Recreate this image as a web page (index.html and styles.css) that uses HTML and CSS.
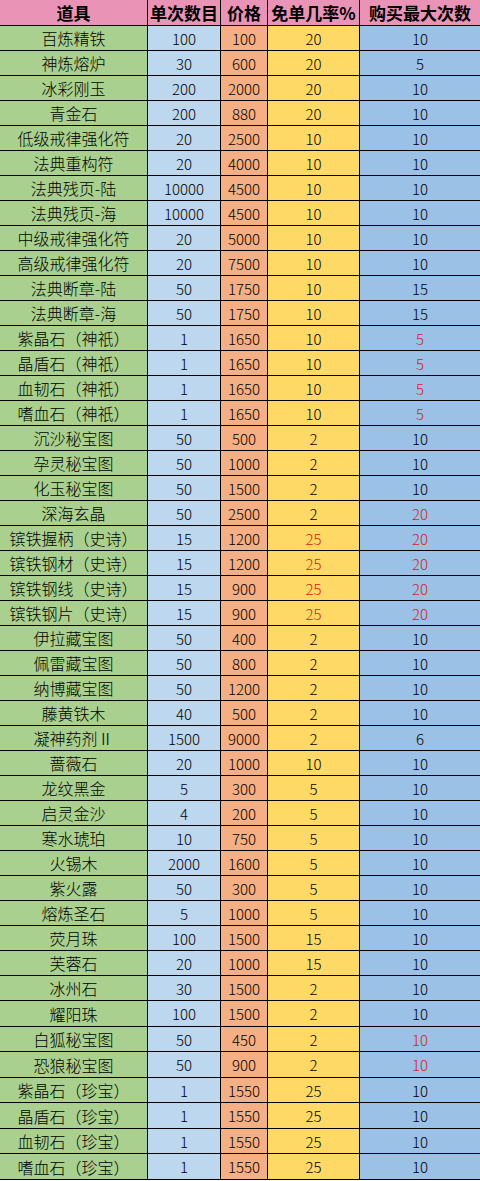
FILE: index.html
```html
<!DOCTYPE html>
<html lang="zh-CN">
<head>
<meta charset="utf-8">
<title>道具</title>
<link rel="stylesheet" href="styles.css">
</head>
<body>
<div class="sheet">
  <div class="row head"><div class="c c1">道具</div><div class="c c2">单次数目</div><div class="c c3">价格</div><div class="c c4">免单几率%</div><div class="c c5">购买最大次数</div></div>
  <div class="row"><div class="c c1">百炼精铁</div><div class="c c2">100</div><div class="c c3">100</div><div class="c c4">20</div><div class="c c5">10</div></div>
  <div class="row"><div class="c c1">神炼熔炉</div><div class="c c2">30</div><div class="c c3">600</div><div class="c c4">20</div><div class="c c5">5</div></div>
  <div class="row"><div class="c c1">冰彩刚玉</div><div class="c c2">200</div><div class="c c3">2000</div><div class="c c4">20</div><div class="c c5">10</div></div>
  <div class="row"><div class="c c1">青金石</div><div class="c c2">200</div><div class="c c3">880</div><div class="c c4">20</div><div class="c c5">10</div></div>
  <div class="row"><div class="c c1">低级戒律强化符</div><div class="c c2">20</div><div class="c c3">2500</div><div class="c c4">10</div><div class="c c5">10</div></div>
  <div class="row"><div class="c c1">法典重构符</div><div class="c c2">20</div><div class="c c3">4000</div><div class="c c4">10</div><div class="c c5">10</div></div>
  <div class="row"><div class="c c1">法典残页-陆</div><div class="c c2">10000</div><div class="c c3">4500</div><div class="c c4">10</div><div class="c c5">10</div></div>
  <div class="row"><div class="c c1">法典残页-海</div><div class="c c2">10000</div><div class="c c3">4500</div><div class="c c4">10</div><div class="c c5">10</div></div>
  <div class="row"><div class="c c1">中级戒律强化符</div><div class="c c2">20</div><div class="c c3">5000</div><div class="c c4">10</div><div class="c c5">10</div></div>
  <div class="row"><div class="c c1">高级戒律强化符</div><div class="c c2">20</div><div class="c c3">7500</div><div class="c c4">10</div><div class="c c5">10</div></div>
  <div class="row"><div class="c c1">法典断章-陆</div><div class="c c2">50</div><div class="c c3">1750</div><div class="c c4">10</div><div class="c c5">15</div></div>
  <div class="row"><div class="c c1">法典断章-海</div><div class="c c2">50</div><div class="c c3">1750</div><div class="c c4">10</div><div class="c c5">15</div></div>
  <div class="row"><div class="c c1">紫晶石（神祇）</div><div class="c c2">1</div><div class="c c3">1650</div><div class="c c4">10</div><div class="c c5 red">5</div></div>
  <div class="row"><div class="c c1">晶盾石（神祇）</div><div class="c c2">1</div><div class="c c3">1650</div><div class="c c4">10</div><div class="c c5 red">5</div></div>
  <div class="row"><div class="c c1">血韧石（神祇）</div><div class="c c2">1</div><div class="c c3">1650</div><div class="c c4">10</div><div class="c c5 red">5</div></div>
  <div class="row"><div class="c c1">嗜血石（神祇）</div><div class="c c2">1</div><div class="c c3">1650</div><div class="c c4">10</div><div class="c c5 red">5</div></div>
  <div class="row"><div class="c c1">沉沙秘宝图</div><div class="c c2">50</div><div class="c c3">500</div><div class="c c4">2</div><div class="c c5">10</div></div>
  <div class="row"><div class="c c1">孕灵秘宝图</div><div class="c c2">50</div><div class="c c3">1000</div><div class="c c4">2</div><div class="c c5">10</div></div>
  <div class="row"><div class="c c1">化玉秘宝图</div><div class="c c2">50</div><div class="c c3">1500</div><div class="c c4">2</div><div class="c c5">10</div></div>
  <div class="row"><div class="c c1">深海玄晶</div><div class="c c2">50</div><div class="c c3">2500</div><div class="c c4">2</div><div class="c c5 red">20</div></div>
  <div class="row"><div class="c c1">镔铁握柄（史诗）</div><div class="c c2">15</div><div class="c c3">1200</div><div class="c c4 red">25</div><div class="c c5 red">20</div></div>
  <div class="row"><div class="c c1">镔铁钢材（史诗）</div><div class="c c2">15</div><div class="c c3">1200</div><div class="c c4 red">25</div><div class="c c5 red">20</div></div>
  <div class="row"><div class="c c1">镔铁钢线（史诗）</div><div class="c c2">15</div><div class="c c3">900</div><div class="c c4 red">25</div><div class="c c5 red">20</div></div>
  <div class="row"><div class="c c1">镔铁钢片（史诗）</div><div class="c c2">15</div><div class="c c3">900</div><div class="c c4 red">25</div><div class="c c5 red">20</div></div>
  <div class="row"><div class="c c1">伊拉藏宝图</div><div class="c c2">50</div><div class="c c3">400</div><div class="c c4">2</div><div class="c c5">10</div></div>
  <div class="row"><div class="c c1">佩雷藏宝图</div><div class="c c2">50</div><div class="c c3">800</div><div class="c c4">2</div><div class="c c5">10</div></div>
  <div class="row"><div class="c c1">纳博藏宝图</div><div class="c c2">50</div><div class="c c3">1200</div><div class="c c4">2</div><div class="c c5">10</div></div>
  <div class="row"><div class="c c1">藤黄铁木</div><div class="c c2">40</div><div class="c c3">500</div><div class="c c4">2</div><div class="c c5">10</div></div>
  <div class="row"><div class="c c1">凝神药剂Ⅱ</div><div class="c c2">1500</div><div class="c c3">9000</div><div class="c c4">2</div><div class="c c5">6</div></div>
  <div class="row"><div class="c c1">蔷薇石</div><div class="c c2">20</div><div class="c c3">1000</div><div class="c c4">10</div><div class="c c5">10</div></div>
  <div class="row"><div class="c c1">龙纹黑金</div><div class="c c2">5</div><div class="c c3">300</div><div class="c c4">5</div><div class="c c5">10</div></div>
  <div class="row"><div class="c c1">启灵金沙</div><div class="c c2">4</div><div class="c c3">200</div><div class="c c4">5</div><div class="c c5">10</div></div>
  <div class="row"><div class="c c1">寒水琥珀</div><div class="c c2">10</div><div class="c c3">750</div><div class="c c4">5</div><div class="c c5">10</div></div>
  <div class="row"><div class="c c1">火锡木</div><div class="c c2">2000</div><div class="c c3">1600</div><div class="c c4">5</div><div class="c c5">10</div></div>
  <div class="row"><div class="c c1">紫火露</div><div class="c c2">50</div><div class="c c3">300</div><div class="c c4">5</div><div class="c c5">10</div></div>
  <div class="row"><div class="c c1">熔炼圣石</div><div class="c c2">5</div><div class="c c3">1000</div><div class="c c4">5</div><div class="c c5">10</div></div>
  <div class="row"><div class="c c1">荧月珠</div><div class="c c2">100</div><div class="c c3">1500</div><div class="c c4">15</div><div class="c c5">10</div></div>
  <div class="row"><div class="c c1">芙蓉石</div><div class="c c2">20</div><div class="c c3">1000</div><div class="c c4">15</div><div class="c c5">10</div></div>
  <div class="row"><div class="c c1">冰州石</div><div class="c c2">30</div><div class="c c3">1500</div><div class="c c4">2</div><div class="c c5">10</div></div>
  <div class="row tall"><div class="c c1">耀阳珠</div><div class="c c2">100</div><div class="c c3">1500</div><div class="c c4">2</div><div class="c c5">10</div></div>
  <div class="row"><div class="c c1">白狐秘宝图</div><div class="c c2">50</div><div class="c c3">450</div><div class="c c4">2</div><div class="c c5 red">10</div></div>
  <div class="row tall"><div class="c c1">恐狼秘宝图</div><div class="c c2">50</div><div class="c c3">900</div><div class="c c4">2</div><div class="c c5 red">10</div></div>
  <div class="row"><div class="c c1">紫晶石（珍宝）</div><div class="c c2">1</div><div class="c c3">1550</div><div class="c c4">25</div><div class="c c5">10</div></div>
  <div class="row tall"><div class="c c1">晶盾石（珍宝）</div><div class="c c2">1</div><div class="c c3">1550</div><div class="c c4">25</div><div class="c c5">10</div></div>
  <div class="row"><div class="c c1">血韧石（珍宝）</div><div class="c c2">1</div><div class="c c3">1550</div><div class="c c4">25</div><div class="c c5">10</div></div>
  <div class="row tall"><div class="c c1">嗜血石（珍宝）</div><div class="c c2">1</div><div class="c c3">1550</div><div class="c c4">25</div><div class="c c5">10</div></div>
</div>
</body>
</html>
```

FILE: styles.css
```css
html, body {
  margin: 0;
  padding: 0;
  background: #ffffff;
}

.sheet {
  width: 480px;
  font-family: "Noto Sans CJK SC", "Noto Sans", sans-serif;
  font-weight: 300;
  font-size: 16px;
  color: #000000;
}

.row {
  display: grid;
  grid-template-columns: 148px 73px 47px 92px 120px;
  height: 25px;
}

.row.head {
  height: 26px;
}

.row.tall {
  height: 26px;
}

.c {
  box-sizing: border-box;
  border-bottom: 1px solid #000000;
  border-right: 1px solid #000000;
  display: flex;
  align-items: center;
  justify-content: center;
  line-height: 1;
  white-space: nowrap;
  overflow: hidden;
}

.c5 {
  border-right: none;
}

.c1 { background: #a9d08e; }
.c2 { background: #bdd7ee; font-size: 15px; }
.c3 { background: #f4b084; font-size: 15px; }
.c4 { background: #ffd966; font-size: 15px; }
.c5 { background: #9bc2e6; font-size: 15px; }

.head .c {
  background: #e993b6;
  font-weight: 700;
  font-size: 17px;
}

.red {
  color: #d9201e;
}
```
